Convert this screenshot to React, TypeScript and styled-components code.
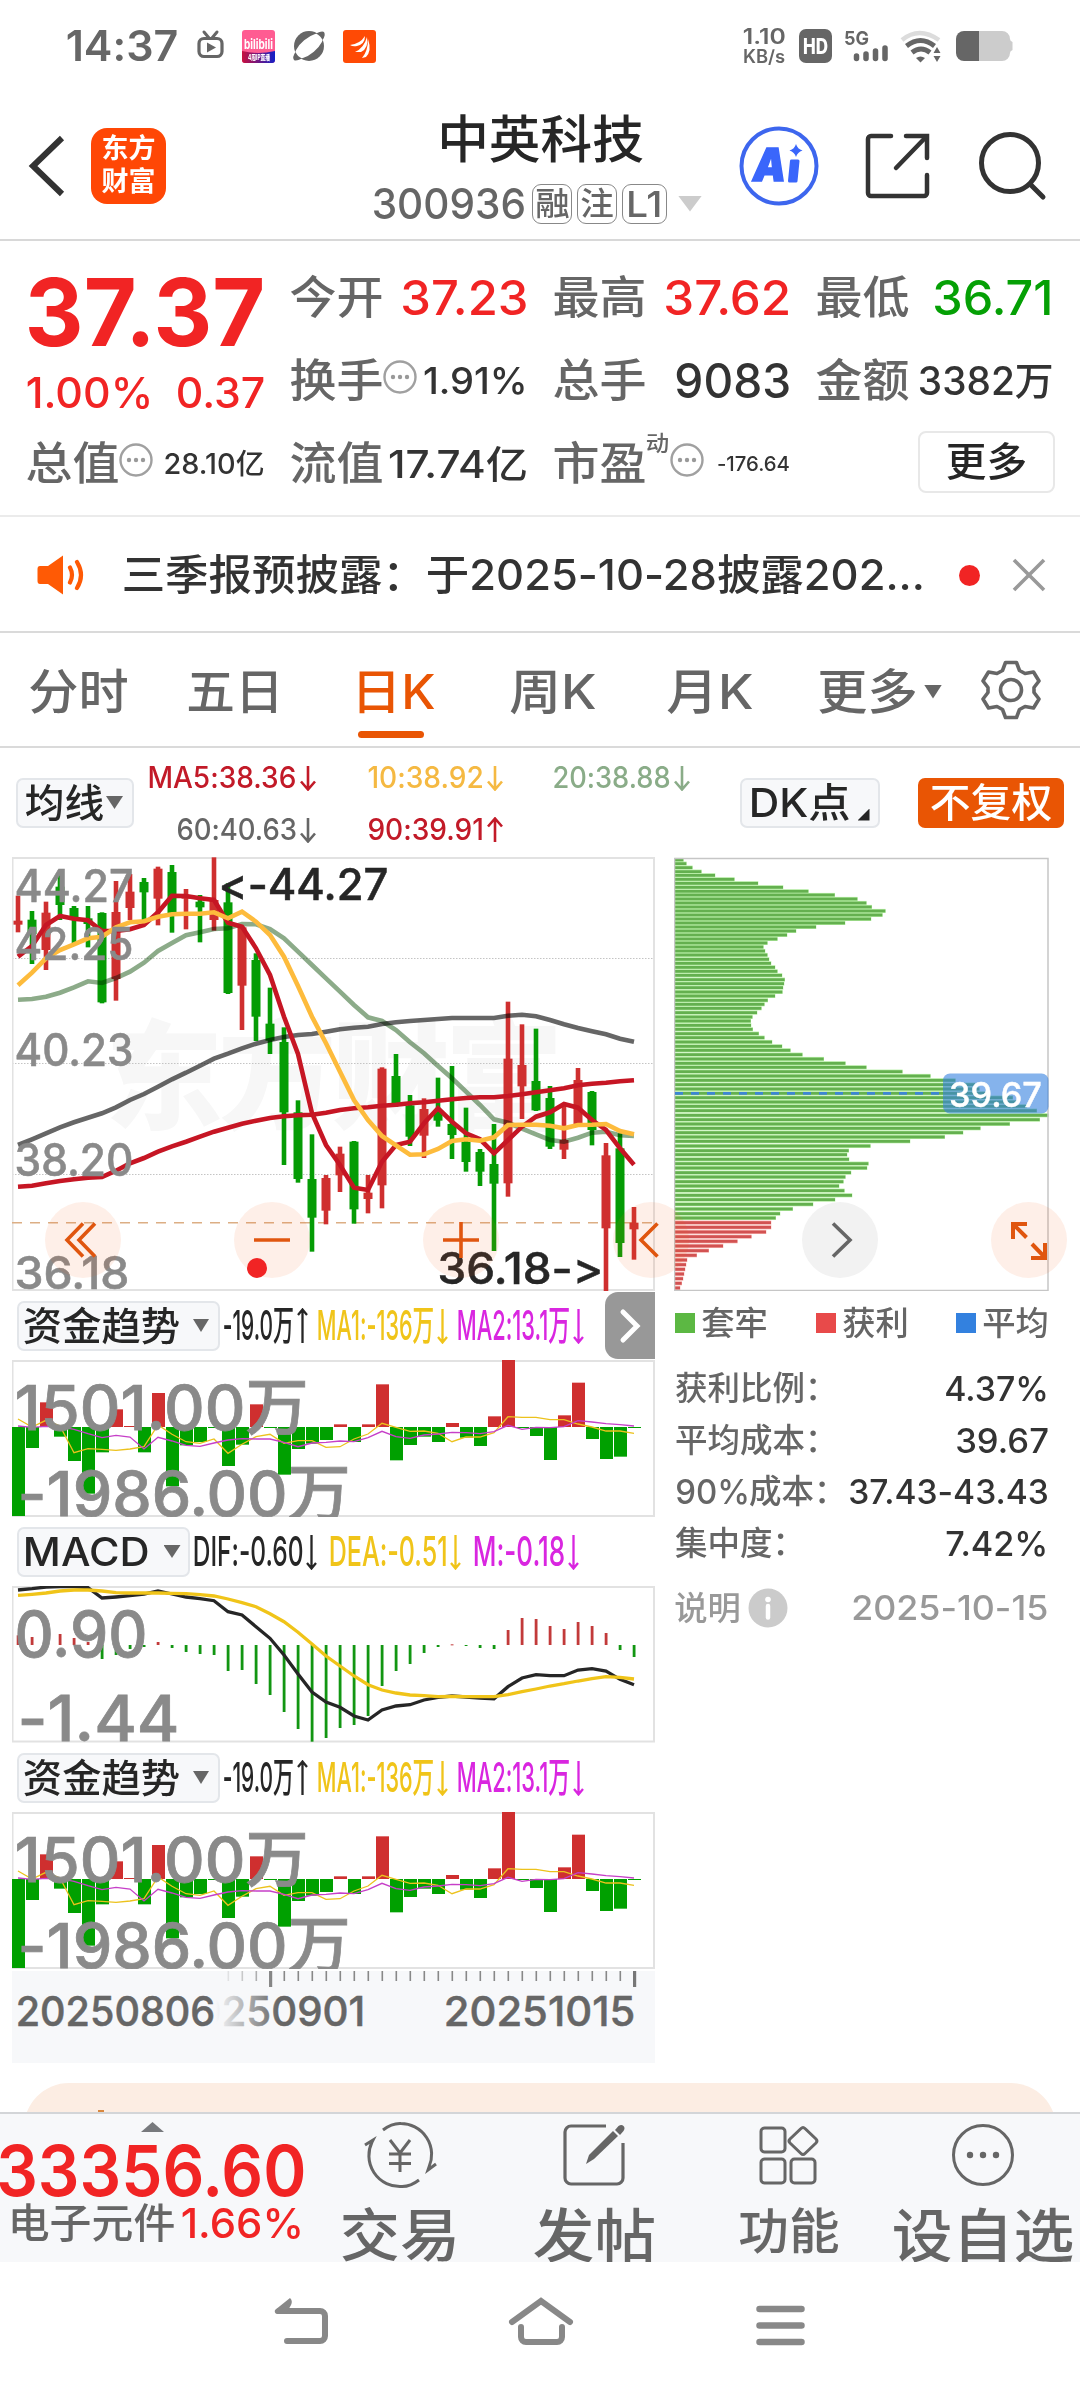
import React, { useLayoutEffect, useRef, useState } from "react";
import styled, { createGlobalStyle, css } from "styled-components";

const GlobalStyle = createGlobalStyle`
  * { box-sizing: border-box; }
  html, body { margin: 0; padding: 0; background: #fff; }
  body {
    width: 1080px;
    overflow-x: hidden;
    font-family: Inter, "Noto Sans CJK SC", sans-serif;
    font-feature-settings: "calt" 0;
    color: #333;
  }
  svg { display: block; flex: none; }
`;

const FONT = 'Inter, "Noto Sans CJK SC", sans-serif';
const RED = "#f12424";
const UP = "#cf2f2f";
const DOWN = "#059c05";
const GREY = "#666";
const INK = "#262626";
const ORANGE = "#e95504";

/* ---------- squeezed text ---------- */

const FitBox = styled.span<{ $w: number; $size: number; $weight: number; $color?: string }>`
  display: inline-block;
  flex: none;
  width: ${(p) => p.$w}px;
  height: ${(p) => p.$size}px;
  line-height: ${(p) => p.$size}px;
  font-size: ${(p) => p.$size}px;
  font-weight: ${(p) => p.$weight};
  color: ${(p) => p.$color ?? "inherit"};
  white-space: pre;
`;

const FitInner = styled.span`
  display: inline-block;
  transform-origin: 0 50%;
`;

type FitProps = { w: number; size: number; weight?: number; color?: string; children: string };

function Fit({ w, size, weight = 500, color, children }: FitProps) {
  const ref = useRef<HTMLSpanElement>(null);
  const [scale, setScale] = useState(1);
  useLayoutEffect(() => {
    const natural = ref.current?.offsetWidth ?? 0;
    if (natural) setScale((w + size * 0.11) / natural);
  }, [w, size, children]);
  return (
    <FitBox $w={w} $size={size} $weight={weight} $color={color}>
      <FitInner ref={ref} style={{ transform: `translateX(${-size * 0.055}px) scaleX(${scale})` }}>
        {children}
      </FitInner>
    </FitBox>
  );
}

type SvgFitProps = { x1: number; x2: number; y: number; size: number; color: string; weight?: number; children: string };

function SvgFit({ x1, x2, y, size, color, weight = 500, children }: SvgFitProps) {
  const pad = size * 0.055;
  return (
    <text
      x={x1 - pad}
      y={y}
      fontSize={size}
      fontFamily={FONT}
      fontWeight={weight}
      fill={color}
      stroke={color}
      strokeWidth={size * 0.012}
      textLength={x2 - x1 + pad * 2}
      lengthAdjust="spacingAndGlyphs"
    >
      {children}
    </text>
  );
}

const Triangle = styled.i<{ $w: number; $h: number; $color: string; $up?: boolean }>`
  display: block;
  flex: none;
  width: ${(p) => p.$w}px;
  height: ${(p) => p.$h}px;
  background: ${(p) => p.$color};
  clip-path: ${(p) => (p.$up ? "polygon(50% 0, 100% 100%, 0 100%)" : "polygon(0 0, 100% 0, 50% 100%)")};
`;

/* ---------- status bar ---------- */

const StatusBar = styled.div`
  height: 92px;
  padding: 0 66px 0 68px;
  display: flex;
  align-items: center;
  color: ${GREY};
`;
const StatusIcons = styled.div`
  display: flex;
  align-items: center;
  gap: 17px;
  margin-left: 21px;
`;
const StatusRight = styled.div`
  margin-left: auto;
  display: flex;
  align-items: center;
`;
const NetSpeed = styled.div`
  display: flex;
  flex-direction: column;
  gap: 1px;
  margin-right: 15px;
`;

function StatusRow() {
  return (
    <StatusBar>
      <Fit w={108} size={42} weight={600}>14:37</Fit>
      <StatusIcons>
        <svg width="28" height="34" viewBox="0 0 28 34">
          <path d="M7 3l5 6M20 3l-5 6" stroke={GREY} strokeWidth="3" strokeLinecap="round" />
          <rect x="2" y="9.500" width="23" height="18" rx="5" fill="none" stroke={GREY} strokeWidth="3.200" />
          <path d="M10 13.500l9 5-9 5z" fill={GREY} />
        </svg>
        <svg width="33" height="33" viewBox="0 0 33 33">
          <defs>
            <linearGradient id="bl" x1="0" x2="1"><stop offset="0" stopColor="#c8103e" /><stop offset="1" stopColor="#1220c8" /></linearGradient>
          </defs>
          <rect width="33" height="33" rx="3" fill="#ff5c92" />
          <path d="M0 21q16 4 33 0v9a3 3 0 0 1-3 3h-27a3 3 0 0 1-3-3z" fill="url(#bl)" />
          <text x="2" y="19" fontSize="13" fontWeight="700" fill="#fff" textLength="29" lengthAdjust="spacingAndGlyphs" fontFamily={FONT}>bilibili</text>
          <text x="6" y="30" fontSize="7" fontWeight="800" fill="#fff" textLength="22" lengthAdjust="spacingAndGlyphs" fontFamily={FONT}>4周IP直播</text>
        </svg>
        <svg width="34" height="34" viewBox="0 0 34 34">
          <circle cx="17" cy="17" r="15" fill={GREY} />
          <ellipse cx="17" cy="17" rx="17.500" ry="7.500" transform="rotate(-40 17 17)" fill="#fff" />
          <path d="M24 4.500q6-3 8-1.500 2 3-1.500 8-2-4.500-6.500-6.500zM10 29.500q-6 3-8 1.500-2-3 1.500-8 2 4.500 6.500 6.500z" fill={GREY} />
        </svg>
        <svg width="33" height="33" viewBox="0 0 33 33">
          <rect width="33" height="33" rx="3" fill="#ff4a05" />
          <path d="M7 15q10-1 15-9 0 8-8 10-4 1-7-1zM12 22q9-4 12-15 2 11-6 15zM19 28q6-7 6-19 4 12-2 18z" fill="#fff" />
        </svg>
      </StatusIcons>
      <StatusRight>
        <NetSpeed>
          <Fit w={40} size={21} weight={600}>1.10</Fit>
          <Fit w={40} size={18} weight={600}>KB/s</Fit>
        </NetSpeed>
        <svg width="33" height="34" viewBox="0 0 33 34">
          <rect width="33" height="34" rx="7" fill={GREY} />
          <text x="4" y="24.500" fontSize="21" fontWeight="800" fill="#fff" textLength="25" lengthAdjust="spacingAndGlyphs" fontFamily={FONT}>HD</text>
        </svg>
        <svg width="60" height="34" viewBox="0 0 60 34">
          <text x="12" y="15.500" fontSize="19" fontWeight="700" fill={GREY} textLength="25" lengthAdjust="spacingAndGlyphs" fontFamily={FONT}>5G</text>
          <path d="M24.500 27v2.500M34 25v4.500M43.500 22v7.500M53 19v10.500" stroke={GREY} strokeWidth="5.500" strokeLinecap="round" />
        </svg>
        <svg width="60" height="34" viewBox="12 0 60 34">
          <path d="M22 11q17-14 37 0" fill="none" stroke="#dcdcdc" strokeWidth="4.500" />
          <path d="M26.500 17q14-11 28 0" fill="none" stroke={GREY} strokeWidth="4.800" />
          <path d="M32 23.500q9-7 18 0" fill="none" stroke={GREY} strokeWidth="4.800" />
          <path d="M36 29q4.500-3 9 0l-4.500 4.500z" fill={GREY} />
          <path d="M57 18l3.500 6h-7zM57 33l3.500-6h-7z" fill={GREY} />
        </svg>
        <svg width="62" height="32" viewBox="0 0 62 32">
          <path d="M9 1h38a8 8 0 0 1 8 8q0 2 2.500 3v8q-2.500 1-2.500 3a8 8 0 0 1-8 8h-38z" transform="translate(3)" fill="#ccc" />
          <path d="M27 1H12a8 8 0 0 0-8 8v14a8 8 0 0 0 8 8h15z" fill={GREY} />
        </svg>
      </StatusRight>
    </StatusBar>
  );
}

/* ---------- header ---------- */

const Header = styled.header`
  height: 149px;
  padding-left: 28px;
  border-bottom: 2px solid #d8d8d8;
  display: flex;
  align-items: center;
`;
const Logo = styled.div`
  width: 75px;
  height: 76px;
  margin: 0 208px 0 26px;
  border-radius: 16px;
  background: #ff4705;
  color: #fff;
  font-size: 27px;
  font-weight: 700;
  line-height: 33px;
  padding: 4px 0 0 0;
  text-align: center;
`;
const TitleBlock = styled.div`
  width: 330px;
  display: flex;
  flex-direction: column;
  gap: 16px;
  padding-top: 10px;
`;
const TitleLine = styled.div`
  padding-left: 66px;
  height: 50px;
  display: flex;
  align-items: center;
`;
const CodeLine = styled.div`
  display: flex;
  align-items: center;
  height: 46px;
  color: ${GREY};
`;
const Tag = styled.span<{ $w: number }>`
  width: ${(p) => p.$w}px;
  height: 40px;
  margin-right: 5px;
  border: 1.500px solid #888;
  border-radius: 9px;
  display: flex;
  justify-content: center;
  align-items: center;
`;
const Spacer = styled.span<{ $w: number }>`
  flex: none;
  width: ${(p) => p.$w}px;
`;

function TopHeader() {
  return (
    <Header>
      <svg width="37" height="62" viewBox="0 0 37 62">
        <path d="M34 3L5 31l29 28" fill="none" stroke="#333" strokeWidth="6" />
      </svg>
      <Logo>东方<br />财富</Logo>
      <TitleBlock>
        <TitleLine><Fit w={201} size={51} color={INK}>中英科技</Fit></TitleLine>
        <CodeLine>
          <Fit w={150} size={43}>300936</Fit>
          <Spacer $w={8} />
          <Tag $w={40}><Fit w={31} size={32}>融</Fit></Tag>
          <Tag $w={40}><Fit w={30} size={32}>注</Fit></Tag>
          <Tag $w={45}><Fit w={33} size={36}>L1</Fit></Tag>
          <Spacer $w={6} />
          <Triangle $w={24} $h={16} $color="#ccc" />
        </CodeLine>
      </TitleBlock>
      <Spacer $w={35} />
      <svg width="80" height="80" viewBox="0 0 80 80">
        <circle cx="40" cy="40" r="37.500" fill="none" stroke="#3d66ee" strokeWidth="4" />
        <text x="14" y="55" fontSize="46" fontWeight="900" fontStyle="italic" fill="#3a66fb" stroke="#3a66fb" strokeWidth="1.500" textLength="33" lengthAdjust="spacingAndGlyphs" fontFamily={FONT}>A</text>
        <path d="M52.500 35h6.500l-2 20h-6.500z" fill="#3a66fb" stroke="#3a66fb" strokeWidth="3" strokeLinejoin="round" />
        <path d="M57 18q1.500 5 6.500 6.500-5 1.500-6.500 6.500-1.500-5-6.500-6.500 5-1.500 6.500-6.500z" fill="#3a66fb" />
      </svg>
      <Spacer $w={46} />
      <svg width="66" height="68" viewBox="0 0 66 68">
        <g fill="none" stroke="#333" strokeWidth="4.500" strokeLinecap="round">
          <path d="M26 4H6a3 3 0 0 0-3 3v54a3 3 0 0 0 3 3h53a3 3 0 0 0 3-3V43" />
          <path d="M41 4h21v22" />
          <path d="M61 5L31 36" />
        </g>
      </svg>
      <Spacer $w={48} />
      <svg width="68" height="70" viewBox="0 0 68 70">
        <circle cx="31" cy="32" r="28.500" fill="none" stroke="#333" strokeWidth="5" />
        <path d="M51 53l13 13" stroke="#333" strokeWidth="5" strokeLinecap="round" />
      </svg>
    </Header>
  );
}

/* ---------- quote ---------- */

const Quote = styled.section`
  height: 276px;
  padding: 15px 0 0 28px;
  border-bottom: 2px solid #ebebeb;
  display: grid;
  grid-template-columns: 235px 234px 234px 233px;
  grid-template-rows: repeat(3, 83px);
  column-gap: 29px;
`;
const PriceCell = styled.div`
  grid-row: span 2;
  display: flex;
  flex-direction: column;
`;
const PriceLine = styled.div<{ $h: number }>`
  height: ${(p) => p.$h}px;
  display: flex;
  align-items: center;
  justify-content: space-between;
`;
const Cell = styled.div`
  display: flex;
  align-items: center;
  color: #333;
`;
const Push = styled.span`
  margin-left: auto;
  display: flex;
`;
const DotsWrap = styled.span`
  margin: -7px 0 0 2px;
`;
const Sup = styled.span`
  margin: -42px 0 0 3px;
  display: flex;
`;
const MoreButton = styled.div`
  margin-left: auto;
  width: 137px;
  height: 62px;
  border: 2px solid #e8e8e8;
  border-radius: 8px;
  display: flex;
  align-items: center;
  justify-content: center;
  transform: translate(4px, -2px);
`;

function Dots() {
  return (
    <DotsWrap>
      <svg width="34" height="34" viewBox="0 0 34 34">
        <circle cx="17" cy="17" r="15.500" fill="none" stroke="#a0a0a0" strokeWidth="2.400" />
        <g fill="#999"><circle cx="10" cy="17" r="2.200" /><circle cx="17" cy="17" r="2.200" /><circle cx="24" cy="17" r="2.200" /></g>
      </svg>
    </DotsWrap>
  );
}

type StatProps = { label: string; value: string; w: number; size: number; color?: string; dots?: boolean; sup?: string };

function Stat({ label, value, w, size, color, dots, sup }: StatProps) {
  return (
    <Cell>
      <Fit w={89} size={45} color={GREY}>{label}</Fit>
      {sup && <Sup><Fit w={21} size={22} color={GREY}>{sup}</Fit></Sup>}
      {dots && <Dots />}
      <Push><Fit w={w} size={size} color={color}>{value}</Fit></Push>
    </Cell>
  );
}

function QuotePanel() {
  return (
    <Quote>
      <PriceCell>
        <PriceLine $h={112}><Spacer $w={2} /><Fit w={230} size={94} weight={700} color={RED}>37.37</Fit><Spacer $w={3} /></PriceLine>
        <PriceLine $h={50}>
          <Fit w={123} size={42} color={RED}>1.00%</Fit>
          <Fit w={85} size={42} color={RED}>0.37</Fit>
        </PriceLine>
      </PriceCell>
      <Stat label="今开" value="37.23" w={123} size={48} color={RED} />
      <Stat label="最高" value="37.62" w={123} size={48} color={RED} />
      <Stat label="最低" value="36.71" w={116} size={48} color="#05a005" />
      <Stat label="换手" value="1.91%" w={101} size={37} dots />
      <Stat label="总手" value="9083" w={112} size={48} />
      <Stat label="金额" value="3382万" w={131} size={39} />
      <Stat label="总值" value="28.10亿" w={98} size={28} dots />
      <Stat label="流值" value="17.74亿" w={136} size={38} />
      <Stat label="市盈" value="-176.64" w={71} size={20} sup="动" dots />
      <Cell><MoreButton><Fit w={77} size={40} color={INK}>更多</Fit></MoreButton></Cell>
    </Quote>
  );
}

/* ---------- news ---------- */

const News = styled.div`
  height: 116px;
  padding: 2px 32px 0 37px;
  border-bottom: 2px solid #dadada;
  display: flex;
  align-items: center;
`;
const Dot = styled.i`
  width: 21px;
  height: 21px;
  border-radius: 50%;
  background: ${RED};
  margin: 0 32px 0 36px;
`;

function NewsRow() {
  return (
    <News>
      <svg width="50" height="42" viewBox="0 0 50 42">
        <path d="M3 12h8L26 1.500v39L11 30H3q-2.500 0-2.500-3V15q0-3 2.500-3z" fill="#ff5a05" />
        <path d="M33 13.500q4 7.500 0 15M40 8q8 13 0 26" fill="none" stroke="#ff5a05" strokeWidth="4.200" strokeLinecap="round" />
      </svg>
      <Spacer $w={37} />
      <Fit w={799} size={42.5}>三季报预披露：于2025-10-28披露202...</Fit>
      <Dot />
      <svg width="34" height="34" viewBox="0 0 34 34"><path d="M2 2l30 30M32 2L2 32" stroke="#999" strokeWidth="3.600" /></svg>
    </News>
  );
}

/* ---------- tabs ---------- */

const Tabs = styled.nav`
  height: 115px;
  padding: 0 37px 0 31px;
  border-bottom: 2px solid #dadada;
  display: flex;
  align-items: center;
  color: ${GREY};
`;
const Tab = styled.div<{ $gap: number; $active?: boolean }>`
  margin-right: ${(p) => p.$gap}px;
  height: 100%;
  padding-top: 4px;
  display: flex;
  align-items: center;
  gap: 9px;
  position: relative;
  ${(p) =>
    p.$active &&
    css`
      color: ${ORANGE};
      &::after {
        content: "";
        position: absolute;
        left: 4px;
        bottom: 8px;
        width: 66px;
        height: 7px;
        border-radius: 4px;
        background: ${ORANGE};
      }
    `}
`;

function TabRow() {
  return (
    <Tabs>
      <Tab $gap={63}><Fit w={95} size={48}>分时</Fit></Tab>
      <Tab $gap={73}><Fit w={92} size={48}>五日</Fit></Tab>
      <Tab $gap={79} $active><Fit w={79} size={48}>日K</Fit></Tab>
      <Tab $gap={75}><Fit w={82} size={48}>周K</Fit></Tab>
      <Tab $gap={69}><Fit w={82} size={48}>月K</Fit></Tab>
      <Tab $gap={39}><Fit w={95} size={48}>更多</Fit><Triangle $w={18} $h={14} $color={GREY} /></Tab>
      <svg width="60" height="60" viewBox="0 0 60 60">
        <g fill="none" stroke={GREY} strokeWidth="3.600" strokeLinejoin="round">
          <path d="M24.500 2.500h11l3 8 5.500 3 8.500-1.500L58 21l-5 6.500v5L58 39l-5.500 9-8.500-1.500-5.500 3-3 8h-11l-3-8-5.500-3L7.500 48 2 39l5-6.500v-5L2 21l5.500-9 8.500 1.500 5.500-3z" />
          <circle cx="30" cy="30" r="10.500" />
        </g>
      </svg>
    </Tabs>
  );
}

/* ---------- indicator bar ---------- */

const IndicatorBar = styled.div`
  height: 109px;
  padding: 0 16px;
  display: flex;
  align-items: center;
`;
const Chip = styled.div<{ $w: number; $orange?: boolean }>`
  flex: none;
  width: ${(p) => p.$w}px;
  height: 50px;
  border: 2px solid ${(p) => (p.$orange ? ORANGE : "#e3e6ea")};
  border-radius: 7px;
  background: ${(p) => (p.$orange ? ORANGE : "#f7f8fa")};
  color: ${(p) => (p.$orange ? "#fff" : INK)};
  display: flex;
  align-items: center;
  justify-content: center;
`;
const MaGrid = styled.div`
  width: 541px;
  margin: 2px 50px 0 15px;
  display: grid;
  grid-template-columns: 167px 187px 187px;
  grid-template-rows: 52px 52px;
  align-items: center;
  justify-items: end;
`;
const MaItem = styled.span<{ $color: string }>`
  display: flex;
  align-items: center;
  gap: 5px;
  color: ${(p) => p.$color};
`;
const Corner = styled.i`
  align-self: flex-end;
  width: 12px;
  height: 12px;
  margin: 0 0 5px 10px;
  background: ${INK};
  clip-path: polygon(100% 0, 100% 100%, 0 100%);
`;

type ArrowProps = { up?: boolean; w: number; h: number; sw?: number };

function Arrow({ up, w, h, sw = 2.6 }: ArrowProps) {
  const m = w / 2;
  const head = up ? `M1 ${m + 1.5}L${m} 1.500L${w - 1} ${m + 1.5}` : `M1 ${h - m - 1.5}L${m} ${h - 1.5}L${w - 1} ${h - m - 1.5}`;
  return (
    <svg width={w} height={h} viewBox={`0 0 ${w} ${h}`}>
      <path d={`M${m} 1V${h - 1}${head}`} fill="none" stroke="currentColor" strokeWidth={sw} />
    </svg>
  );
}

function Ma({ text, w, color, up }: { text: string; w: number; color: string; up?: boolean }) {
  return (
    <MaItem $color={color}>
      <Fit w={w} size={29.5}>{text}</Fit>
      <Arrow w={16} h={26} up={up} />
    </MaItem>
  );
}

function IndicatorRow() {
  return (
    <IndicatorBar>
      <Chip $w={118}><Fit w={75} size={39}>均线</Fit><Spacer $w={4} /><Triangle $w={17} $h={13} $color={GREY} /></Chip>
      <MaGrid>
        <Ma text="MA5:38.36" w={146} color="#c21a28" />
        <Ma text="10:38.92" w={113} color="#f5b942" />
        <Ma text="20:38.88" w={115} color="#8aac88" />
        <Ma text="60:40.63" w={117} color={GREY} />
        <Ma text="90:39.91" w={113} color="#c21a28" up />
      </MaGrid>
      <Chip $w={140}><Fit w={97} size={40}>DK点</Fit><Corner /></Chip>
      <Spacer $w={38} />
      <Chip $w={146} $orange><Fit w={118} size={40}>不复权</Fit></Chip>
    </IndicatorBar>
  );
}

/* ---------- chart data ---------- */

const COUNT = 45;
const px = (i: number) => 18 + 14 * i;

type Candle = [string, number, number, number, number];
const candles: Candle[] = [
  ["r", 137, 247, 212, 224], ["g", 183, 342, 209, 252], ["r", 155, 360, 188, 300], ["g", 70, 210, 110, 165],
  ["g", 168, 280, 174, 206], ["g", 168, 292, 205, 222], ["g", 187, 460, 189, 457], ["r", 93, 452, 186, 387],
  ["r", 72, 210, 125, 174], ["g", 84, 210, 96, 127], ["r", 50, 226, 56, 146], ["g", 45, 248, 66, 192],
  ["r", 117, 238, 140, 146], ["g", 135, 277, 155, 172], ["r", 22, 242, 150, 210], ["g", 100, 432, 157, 429],
  ["r", 228, 540, 232, 407], ["g", 310, 573, 330, 500], ["g", 413, 612, 521, 572], ["g", 532, 945, 576, 787],
  ["g", 751, 998, 787, 987], ["g", 853, 1205, 987, 1103], ["r", 975, 1123, 984, 1082], ["r", 890, 1026, 911, 976],
  ["g", 873, 1121, 875, 1078], ["r", 975, 1090, 1028, 1047], ["r", 652, 1075, 656, 1006], ["g", 612, 770, 678, 768],
  ["g", 735, 888, 766, 860], ["r", 745, 924, 777, 857], ["g", 683, 830, 780, 812], ["g", 648, 927, 822, 855],
  ["g", 773, 965, 875, 936], ["g", 897, 1008, 906, 965], ["g", 822, 1203, 942, 1001], ["r", 455, 1040, 626, 1000],
  ["r", 523, 807, 645, 709], ["g", 536, 783, 693, 781], ["g", 708, 897, 744, 890], ["r", 762, 927, 870, 899],
  ["r", 654, 825, 690, 822], ["g", 723, 886, 726, 840], ["r", 879, 1323, 916, 1135], ["g", 850, 1221, 895, 1179],
  ["r", 1071, 1229, 1118, 1138],
];
const ma5 = [320, 288, 225, 198, 206, 211, 243, 243, 238, 225, 187, 137, 138, 145, 150, 218, 230, 295, 375, 500, 612, 790, 885, 945, 1013, 1020, 935, 885, 875, 820, 775, 815, 850, 868, 910, 870, 830, 800, 787, 762, 773, 810, 840, 895, 944];
const ma10 = [406, 368, 325, 300, 283, 265, 260, 232, 217, 214, 200, 193, 191, 191, 187, 205, 185, 215, 255, 320, 408, 500, 580, 665, 750, 810, 858, 886, 914, 913, 897, 873, 868, 872, 862, 825, 824, 824, 827, 835, 825, 824, 822, 843, 853];
const ma20 = [449, 447, 440, 428, 412, 394, 399, 384, 365, 338, 303, 279, 256, 247, 237, 235, 222, 223, 237, 265, 305, 345, 385, 425, 465, 502, 513, 540, 577, 610, 648, 685, 725, 765, 808, 818, 836, 853, 870, 875, 863, 848, 845, 856, 858];
const ma60 = [885, 868, 850, 832, 817, 803, 790, 772, 750, 732, 710, 688, 668, 647, 626, 611, 595, 581, 570, 561, 555, 552, 545, 538, 533, 530, 522, 517, 513, 510, 507, 504, 504, 504, 504, 497, 494, 499, 510, 523, 534, 544, 553, 566, 575];
const ma90 = [1010, 1007, 1000, 993, 988, 983, 981, 962, 940, 924, 905, 889, 875, 860, 845, 833, 821, 812, 804, 799, 796, 794, 788, 780, 775, 772, 767, 764, 760, 757, 752, 748, 744, 742, 742, 738, 733, 727, 721, 715, 706, 701, 698, 694, 691];

const flow = [678, 474, 337, 440, 513, 611, 487, 358, 408, 487, 309, 589, 466, 456, 413, 528, 464, 343, 414, 554, 477, 461, 450, 403, 456, 403, 283, 511, 465, 440, 456, 399, 443, 468, 379, 210, 414, 438, 510, 376, 278, 447, 507, 500, 413];
const flow1 = [387, 411, 391, 408, 488, 476, 478, 481, 477, 470, 405, 433, 455, 460, 447, 490, 463, 440, 433, 460, 452, 452, 472, 470, 447, 432, 400, 412, 424, 423, 430, 455, 441, 441, 428, 380, 382, 382, 389, 389, 402, 411, 423, 423, 430];
const flow2 = [408, 412, 409, 410, 418, 431, 443, 436, 441, 477, 442, 453, 466, 469, 459, 450, 446, 447, 447, 457, 470, 459, 457, 453, 455, 443, 424, 440, 445, 435, 432, 427, 428, 431, 425, 406, 418, 412, 413, 410, 392, 396, 401, 404, 408];

const macd = [346, 351, 368, 342, 354, 366, 417, 405, 387, 381, 366, 384, 396, 402, 405, 453, 450, 492, 525, 576, 627, 665, 654, 624, 615, 588, 498, 453, 432, 399, 381, 373, 378, 384, 387, 330, 294, 297, 318, 327, 306, 318, 339, 390, 411];
const dif = [210, 206, 201, 200, 200, 203, 234, 231, 227, 222, 213, 222, 231, 236, 242, 275, 285, 320, 355, 405, 462, 516, 546, 562, 588, 600, 570, 558, 554, 540, 532, 528, 531, 534, 536, 500, 474, 464, 467, 467, 450, 446, 453, 478, 494];
const dea = [226, 223, 219, 213, 210, 210, 213, 218, 219, 219, 219, 220, 221, 224, 228, 237, 248, 260, 281, 305, 337, 372, 408, 438, 468, 494, 510, 519, 525, 527, 530, 529, 530, 530, 530, 524, 515, 507, 498, 491, 483, 476, 470, 472, 477];

const chips: [number, number][] = [
  [30, 70], [41, 79], [53, 97], [65, 124], [76, 165], [88, 223], [100, 294], [112, 369], [124, 445], [135, 524], [147, 592], [159, 619],
  [171, 635], [183, 676], [195, 667], [207, 633], [219, 555], [231, 468], [243, 408], [255, 381], [267, 352], [279, 322], [291, 310],
  [303, 315], [315, 322], [328, 327], [340, 333], [352, 345], [364, 352], [376, 366], [389, 374], [401, 372], [413, 369], [426, 367],
  [438, 345], [451, 323], [463, 313], [475, 304], [488, 291], [501, 277], [513, 272], [526, 273], [538, 278], [551, 296], [563, 313],
  [576, 336], [589, 366], [601, 391], [614, 427], [627, 491], [640, 556], [652, 619], [665, 727], [678, 811], [691, 886], [704, 945],
  [717, 958], [730, 985], [743, 1058], [756, 1070], [769, 1100], [782, 1130], [796, 1165], [809, 1139], [822, 1049], [835, 961],
  [848, 909], [861, 854], [874, 750], [888, 631], [902, 566], [914, 561], [928, 567], [941, 625], [954, 621], [968, 573], [981, 556],
  [995, 550], [1008, 537], [1022, 553], [1036, 576], [1049, 525], [1063, 459], [1077, 398], [1091, 360], [1104, 347], [1118, 333],
  [1132, 333], [1146, 318], [1160, 274], [1174, 232], [1188, 189], [1202, 146], [1216, 110], [1230, 81], [1244, 78], [1258, 75],
  [1272, 72], [1286, 69], [1300, 65], [1314, 60],
];

const line = (ys: number[], top: number) => ys.map((y, i) => `${px(i)},${(y / 3 + top).toFixed(1)}`).join(" ");

/* ---------- charts ---------- */

const Charts = styled.section`
  position: relative;
  height: 1206px;
  padding-left: 12px;
  display: grid;
  grid-template-columns: 643px 376px;
  column-gap: 19px;
`;
const LeftColumn = styled.div`
  display: flex;
  flex-direction: column;
`;
const RightColumn = styled.div`
  display: flex;
  flex-direction: column;
`;
const BlendLine = styled.polyline`
  fill: none;
  stroke-width: 4.600;
  mix-blend-mode: multiply;
`;

function CandleChart() {
  const lines: [number[], string][] = [
    [ma60, "#666"], [ma20, "#8cab89"],
  ];
  return (
    <svg width="643" height="434" viewBox="12 857 643 434">
      <text x="105" y="1120" fontSize="118" fontWeight="900" fontFamily={FONT} fill="#f7f7f7" textLength="458">东方财富</text>
      <g stroke="#c4c4c4" strokeWidth="1" strokeDasharray="1.500 1.500">
        <path d="M12 958.500H654M12 1063.500H654M12 1174.500H654" />
      </g>
      <rect x="12.500" y="858" width="641.500" height="432" fill="none" stroke="#e2e2e2" strokeWidth="2" />
      <path d="M12 1222.700H654" stroke="#dcae84" strokeWidth="1.500" strokeDasharray="10 8" />
      {candles.map(([c, hi, lo, t, b], i) => (
        <g key={i} fill={c === "r" ? UP : DOWN}>
          <rect x={px(i) - 2.3} y={hi / 3 + 850} width="4.600" height={(lo - hi) / 3} />
          <rect x={px(i) - 4.5} y={t / 3 + 850} width="9" height={(b - t) / 3} />
        </g>
      ))}
      {lines.map(([ys, color], i) => <BlendLine key={i} points={line(ys, 850)} stroke={color} />)}
      <polyline points={line(ma90, 850)} fill="none" stroke="#c61624" strokeWidth="4.600" />
      <polyline points={line(ma5, 850)} fill="none" stroke="#c61624" strokeWidth="4.600" />
      <polyline points={line(ma10, 850)} fill="none" stroke="#fdbb3c" strokeWidth="4.600" />
      <SvgFit x1={17} x2={131} y={902} size={44.5} color="#8a8a8a">44.27</SvgFit>
      <SvgFit x1={17} x2={131} y={959.5} size={44.5} color="#8a8a8a">42.25</SvgFit>
      <SvgFit x1={17} x2={131} y={1065.5} size={44.5} color="#8a8a8a">40.23</SvgFit>
      <SvgFit x1={17} x2={131} y={1176} size={44.5} color="#8a8a8a">38.20</SvgFit>
      <SvgFit x1={17} x2={127} y={1288.5} size={44.5} color="#8a8a8a">36.18</SvgFit>
      <SvgFit x1={221} x2={386} y={899.7} size={43.5} color={INK}>{"<-44.27"}</SvgFit>
      <SvgFit x1={440} x2={601} y={1283.5} size={43.5} color={INK}>{"36.18->"}</SvgFit>
    </svg>
  );
}

function FlowChart() {
  const base = 1427;
  return (
    <svg width="643" height="157" viewBox="12 1360 643 157">
      <rect x="12.500" y="1361" width="641.500" height="155" fill="none" stroke="#e2e2e2" strokeWidth="2" />
      {flow.map((v, i) => {
        const y = v / 3 + 1290;
        return <rect key={i} x={12 + 14 * i} y={Math.min(y, base)} width="13" height={Math.max(1, Math.abs(y - base))} fill={y < base ? UP : "#00a000"} />;
      })}
      <polyline points={line(flow1, 1290)} fill="none" stroke="#ecc21c" strokeWidth="1.300" />
      <polyline points={line(flow2, 1290)} fill="none" stroke="#c63fc8" strokeWidth="1.300" />
      <SvgFit x1={18} x2={305} y={1430} size={62.5} color="#8a8a8a">1501.00万</SvgFit>
      <SvgFit x1={21} x2={347} y={1516} size={62.5} color="#8a8a8a">-1986.00万</SvgFit>
    </svg>
  );
}

function MacdChart() {
  const base = 1645;
  return (
    <svg width="643" height="157" viewBox="12 1586 643 157">
      <rect x="12.500" y="1587" width="641.500" height="154.500" fill="none" stroke="#e2e2e2" strokeWidth="2" />
      {macd.map((v, i) => {
        const y = v / 3 + 1520;
        return <rect key={i} x={px(i) - 1.3} y={Math.min(y, base)} width="2.800" height={Math.max(1, Math.abs(y - base))} fill={y < base ? "#c23a3a" : "#129612"} />;
      })}
      <polyline points={line(dif, 1520)} fill="none" stroke={INK} strokeWidth="3.300" />
      <polyline points={line(dea, 1520)} fill="none" stroke="#f0c419" strokeWidth="3.300" />
      <SvgFit x1={18} x2={144} y={1656.5} size={63} color="#8a8a8a">0.90</SvgFit>
      <SvgFit x1={21} x2={176} y={1740.5} size={63} color="#8a8a8a">-1.44</SvgFit>
    </svg>
  );
}

const PanelHeader = styled.div`
  height: 69px;
  padding-left: 5px;
  display: flex;
  align-items: center;
`;
const Readout = styled.span<{ $color: string; $ml: number }>`
  margin-left: ${(p) => p.$ml}px;
  display: flex;
  align-items: center;
  gap: 5px;
  color: ${(p) => p.$color};
`;
const NextButton = styled.div`
  align-self: stretch;
  margin: 1px 0 1px auto;
  width: 50px;
  border-radius: 13px 0 0 13px;
  background: #989898;
  display: flex;
  align-items: center;
  justify-content: center;
`;

function Value({ text, w, color, ml, up }: { text: string; w: number; color: string; ml: number; up?: boolean }) {
  return (
    <Readout $color={color} $ml={ml}>
      <Fit w={w} size={41}>{text}</Fit>
      <Arrow w={11} h={36} sw={2.3} up={up} />
    </Readout>
  );
}

function FlowHeader({ next }: { next?: boolean }) {
  return (
    <PanelHeader>
      <Chip $w={203}><Fit w={153} size={39}>资金趋势</Fit><Spacer $w={15} /><Triangle $w={16} $h={13} $color={GREY} /><Spacer $w={3} /></Chip>
      <Value ml={5} text="-19.0万" w={67} color={INK} up />
      <Value ml={11} text="MA1:-136万" w={113} color="#f0c419" />
      <Value ml={11} text="MA2:13.1万" w={109} color="#d926e0" />
      {next && (
        <NextButton>
          <svg width="24" height="36" viewBox="0 0 24 36"><path d="M5 4l14 14L5 32" fill="none" stroke="#fff" strokeWidth="5" strokeLinecap="round" /></svg>
        </NextButton>
      )}
    </PanelHeader>
  );
}

function MacdHeader() {
  return (
    <PanelHeader>
      <Chip $w={173}><Fit w={123} size={39}>MACD</Fit><Spacer $w={16} /><Triangle $w={17} $h={13} $color={GREY} /><Spacer $w={2} /></Chip>
      <Value ml={5} text="DIF:-0.60" w={106} color={INK} />
      <Value ml={14} text="DEA:-0.51" w={114} color="#f0c419" />
      <Value ml={14} text="M:-0.18" w={88} color="#d926e0" />
    </PanelHeader>
  );
}

function TimeAxis() {
  const ticks = Array.from({ length: COUNT - 15 }, (_, k) => k + 15);
  return (
    <svg width="643" height="94" viewBox="12 1969 643 94">
      <defs>
        <linearGradient id="fade" x1="0" x2="1">
          <stop offset="0" stopColor="#f7f8fa" />
          <stop offset="1" stopColor="#f7f8fa" stopOpacity="0" />
        </linearGradient>
      </defs>
      <rect x="12" y="1971" width="643" height="92" fill="#f7f8fa" />
      {ticks.map((i) => {
        const major = i === 18 || i === 44;
        return <rect key={i} x={px(i) - (major ? 1 : 0.5)} y="1971" width={major ? 3.2 : 1.6} height={major ? 16 : 10} fill={major ? "#777" : "#888"} />;
      })}
      <SvgFit x1={173} x2={363} y={2026} size={41} color={GREY}>20250901</SvgFit>
      <rect x="12" y="1971" width="204" height="92" fill="#f7f8fa" />
      <rect x="216" y="1971" width="62" height="92" fill="url(#fade)" />
      <SvgFit x1={18} x2={213} y={2026} size={41} color={GREY}>20250806</SvgFit>
      <SvgFit x1={446} x2={633} y={2026} size={41} color={GREY}>20251015</SvgFit>
    </svg>
  );
}

function ChipChart() {
  return (
    <svg width="376" height="434" viewBox="674 857 376 434">
      {chips.map(([y, x], i) => {
        const win = y > 1110;
        const w = (x - 45) / 3;
        return (
          <g key={i}>
            <rect x="675" y={y / 3 + 850 - 2.1} width={w + 0.3} height="4.100" fill={win ? "#f7b5b0" : "#b9f0a8"} />
            <rect x="675" y={y / 3 + 850 - 1.4} width={w} height="2.800" fill={win ? "#d25252" : "#64b04f"} />
          </g>
        );
      })}
      <rect x="674.500" y="858.500" width="373.500" height="432" fill="none" stroke="#c6c6c6" strokeWidth="1.500" />
      <path d="M675 1093.400H943" stroke="#3d85d4" strokeWidth="2.800" strokeDasharray="8 8" />
      <rect x="943" y="1073.500" width="105.500" height="40" rx="7" fill="#3381df" fillOpacity=".6" />
      <SvgFit x1={951} x2={1040} y={1106.500} size={34.5} color="#fff">39.67</SvgFit>
    </svg>
  );
}

const Legend = styled.div`
  height: 64px;
  padding: 0 3px 0 1px;
  display: flex;
  align-items: center;
  justify-content: space-between;
  color: ${GREY};
`;
const LegendItem = styled.span<{ $color: string }>`
  display: flex;
  align-items: center;
  gap: 8px;
  &::before {
    content: "";
    width: 20px;
    height: 20px;
    background: ${(p) => p.$color};
  }
`;
const InfoList = styled.div`
  padding: 8px 3px 0 1px;
`;
const InfoRow = styled.div<{ $h?: number; $muted?: boolean }>`
  height: ${(p) => p.$h ?? 51.7}px;
  display: flex;
  align-items: center;
  font-size: 32.5px;
  line-height: 40px;
  font-weight: 500;
  color: ${(p) => (p.$muted ? "#999" : GREY)};
`;

function RightPanel() {
  return (
    <RightColumn>
      <ChipChart />
      <Legend>
        <LegendItem $color="#5cb843"><Fit w={63} size={33}>套牢</Fit></LegendItem>
        <LegendItem $color="#e84a4a"><Fit w={63} size={33}>获利</Fit></LegendItem>
        <LegendItem $color="#3381df"><Fit w={63} size={33}>平均</Fit></LegendItem>
      </Legend>
      <InfoList>
        <InfoRow>获利比例：<Push><Fit w={101} size={34} color="#333">4.37%</Fit></Push></InfoRow>
        <InfoRow>平均成本：<Push><Fit w={90} size={34} color="#333">39.67</Fit></Push></InfoRow>
        <InfoRow><Spacer $w={2} /><Fit w={71} size={34}>90%</Fit><Spacer $w={1} />成本：<Push><Fit w={197} size={34} color="#333">37.43-43.43</Fit></Push></InfoRow>
        <InfoRow>集中度：<Push><Fit w={100} size={34} color="#333">7.42%</Fit></Push></InfoRow>
        <InfoRow $h={77} $muted>
          <Spacer $w={1} />
          <Fit w={63} size={33}>说明</Fit>
          <Spacer $w={9} />
          <svg width="40" height="40" viewBox="0 0 40 40">
            <circle cx="20" cy="20" r="19.500" fill="#cbcbcb" />
            <circle cx="20" cy="11.500" r="2.800" fill="#fff" />
            <path d="M20 18v11.500" stroke="#fff" strokeWidth="4.500" strokeLinecap="round" />
          </svg>
          <Push><Fit w={194} size={34}>2025-10-15</Fit></Push>
        </InfoRow>
      </InfoList>
    </RightColumn>
  );
}

const Controls = styled.div`
  position: absolute;
  left: 45px;
  top: 345px;
  width: 1022px;
  display: flex;
  justify-content: space-between;
`;
const Round = styled.div<{ $grey?: boolean }>`
  width: 76px;
  height: 76px;
  border-radius: 50%;
  position: relative;
  background: ${(p) => (p.$grey ? "#f2f2f2" : "rgba(250, 100, 30, .1)")};
`;
const Badge = styled.i`
  position: absolute;
  left: 13px;
  top: 56px;
  width: 20px;
  height: 20px;
  border-radius: 50%;
  background: ${RED};
`;

function Glyph({ d, color = "#e0560f", sw = 3.6 }: { d: string; color?: string; sw?: number }) {
  return <svg width="76" height="76" viewBox="0 0 76 76"><path d={d} fill="none" stroke={color} strokeWidth={sw} /></svg>;
}

function ChartControls() {
  return (
    <Controls>
      <Round><Glyph d="M38 21.500L22 38l16 16.500M50 21.500L34 38l16 16.500" /></Round>
      <Round><Glyph d="M20 38h36" /><Badge /></Round>
      <Round><Glyph d="M20 38h36M38 20v36" /></Round>
      <Round><Glyph d="M44.500 21.500L28 38l16.500 16.500" /></Round>
      <Round $grey><Glyph d="M31 21.500L48 38 31 54.500" color="#666" /></Round>
      <Round><Glyph sw={4} d="M36 22H22v15M22 22l13.500 13.500M54 41v15H40M54.500 56L41 42" /></Round>
    </Controls>
  );
}

/* ---------- bottom ---------- */

const BannerClip = styled.div`
  margin: 20px 24px 0;
  height: 29px;
  overflow: hidden;
`;
const Banner = styled.div`
  height: 120px;
  padding: 27px 0 0 74px;
  border-radius: 45px;
  background: #fcede3;
  &::before {
    content: "";
    display: block;
    width: 6px;
    height: 10px;
    background: #d9883f;
  }
`;
const BottomBar = styled.footer`
  height: 150px;
  overflow: hidden;
  border-top: 2px solid #d3d5d8;
  background: #f7f8fa;
  color: ${GREY};
  display: grid;
  grid-template-columns: 305px 190px 198px 192px 195px;
`;
const IndexCell = styled.div`
  display: flex;
  flex-direction: column;
  padding-top: 8px;
`;
const IndexLine = styled.div`
  display: flex;
  gap: 10px;
  margin-top: -5px;
  padding-left: 10px;
`;
const IndexArrow = styled.div`
  padding-left: 141px;
  height: 12px;
`;
const IndexValue = styled.div`
  height: 74px;
  display: flex;
  align-items: center;
`;
const Action = styled.div`
  display: flex;
  flex-direction: column;
  align-items: center;
  padding-top: 7px;
`;
const ActionLabel = styled.div`
  height: 80px;
  margin-top: 18px;
  display: flex;
`;
const SysNav = styled.div`
  height: 126px;
  display: flex;
  align-items: flex-start;
  padding: 35px 0 0 274px;
`;

function BottomActions() {
  return (
    <BottomBar>
      <IndexCell>
        <IndexArrow><Triangle $w={23} $h={10} $color="#77797d" $up /></IndexArrow>
        <IndexValue><Fit w={303} size={70} weight={600} color={RED}>33356.60</Fit></IndexValue>
        <IndexLine>
          <Fit w={163} size={41}>电子元件</Fit>
          <Fit w={119} size={41} color={RED}>1.66%</Fit>
        </IndexLine>
      </IndexCell>
      <Action>
        <svg width="74" height="68" viewBox="0 0 74 68">
          <g fill="none" stroke={GREY} strokeWidth="3">
            <path d="M20 9q9-7 18-6.500A31 31 0 0 1 66 46l-1 3 8-6" />
            <path d="M56 59q-9 7-18 6.500A31 31 0 0 1 9 21l1-2-8 5" />
            <path d="M27 19l10 13 10-13M37 32v19M26 33h22M26 42.500h22" />
          </g>
        </svg>
        <ActionLabel><Fit w={114} size={57}>交易</Fit></ActionLabel>
      </Action>
      <Action>
        <svg width="64" height="68" viewBox="0 0 64 68">
          <path d="M44 5H9a6 6 0 0 0-6 6v46a6 6 0 0 0 6 6h46a6 6 0 0 0 6-6V22" fill="none" stroke={GREY} strokeWidth="3.200" />
          <path d="M24 43l3-9 24-24 5 5-24 23z" fill={GREY} />
          <path d="M53 9l3.500-4q3-2 5 0t0 5l-3.500 4z" fill={GREY} />
        </svg>
        <ActionLabel><Fit w={117} size={58}>发帖</Fit></ActionLabel>
      </Action>
      <Action>
        <svg width="60" height="68" viewBox="0 0 60 68">
          <g fill="none" stroke={GREY} strokeWidth="3">
            <rect x="2" y="7" width="24" height="24" rx="3.500" />
            <rect x="2" y="38" width="24" height="24" rx="3.500" />
            <rect x="32" y="38" width="24" height="24" rx="3.500" />
            <path d="M42 7.500q2-2 4 0l11 10.500q2 2 0 4L46 32.500q-2 2-4 0L31 22q-2-2 0-4z" />
          </g>
        </svg>
        <ActionLabel><Fit w={96} size={49}>功能</Fit></ActionLabel>
      </Action>
      <Action>
        <svg width="66" height="68" viewBox="0 0 66 68">
          <circle cx="33" cy="34" r="29.500" fill="none" stroke={GREY} strokeWidth="3" />
          <g fill={GREY}><circle cx="20" cy="34" r="3.200" /><circle cx="33" cy="34" r="3.200" /><circle cx="46" cy="34" r="3.200" /></g>
        </svg>
        <ActionLabel><Fit w={176} size={58}>设自选</Fit></ActionLabel>
      </Action>
    </BottomBar>
  );
}

function SystemNav() {
  return (
    <SysNav>
      <svg width="56" height="50" viewBox="0 0 56 50">
        <path d="M13 42H46a5 5 0 0 0 5-5V17a5 5 0 0 0-5-5H5" transform="translate(0 2)" fill="none" stroke="#888" strokeWidth="6" strokeLinecap="round" />
        <path d="M1 13L16 1q3 3 1 7l-5 9H3q-3-1-2-4z" fill="#888" />
      </svg>
      <Spacer $w={178} />
      <svg width="66" height="50" viewBox="0 0 66 50">
        <g fill="none" stroke="#888" strokeWidth="6" strokeLinecap="round">
          <path d="M4 25L33 4l29 21" />
          <path d="M13 30v10a5 5 0 0 0 5 5h31a5 5 0 0 0 5-5V30" />
        </g>
      </svg>
      <Spacer $w={181} />
      <svg width="52" height="50" viewBox="0 0 52 50">
        <path d="M4.500 12h42M4.500 28.500h42M4.500 45h42" stroke="#888" strokeWidth="6.500" strokeLinecap="round" />
      </svg>
    </SysNav>
  );
}

const Page = styled.main`
  width: 1080px;
  height: 2388px;
  overflow: hidden;
  background: #fff;
  display: flex;
  flex-direction: column;
  > * { flex: none; }
`;

export default function App() {
  return (
    <Page>
      <GlobalStyle />
      <StatusRow />
      <TopHeader />
      <QuotePanel />
      <NewsRow />
      <TabRow />
      <IndicatorRow />
      <Charts>
        <LeftColumn>
          <CandleChart />
          <FlowHeader next />
          <FlowChart />
          <MacdHeader />
          <MacdChart />
          <FlowHeader />
          <FlowChart />
          <TimeAxis />
        </LeftColumn>
        <RightPanel />
        <ChartControls />
      </Charts>
      <BannerClip><Banner /></BannerClip>
      <BottomActions />
      <SystemNav />
    </Page>
  );
}
